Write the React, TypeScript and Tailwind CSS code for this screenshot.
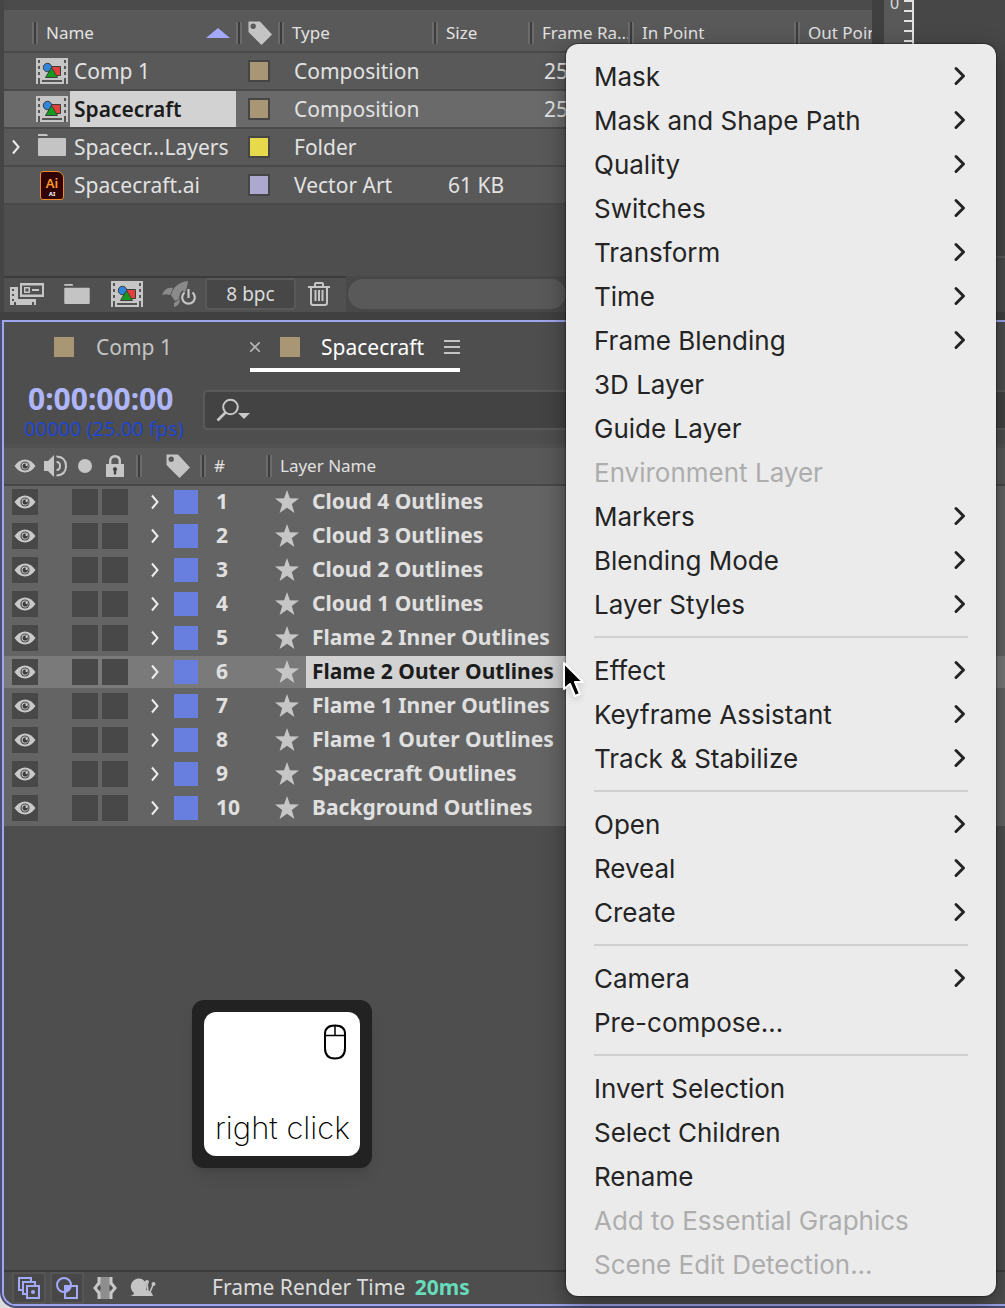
import type { ReactNode } from "react";

type MenuEntry = { label: string; submenu?: boolean; disabled?: boolean };

const menuGroups: MenuEntry[][] = [
  [
    { label: "Mask", submenu: true },
    { label: "Mask and Shape Path", submenu: true },
    { label: "Quality", submenu: true },
    { label: "Switches", submenu: true },
    { label: "Transform", submenu: true },
    { label: "Time", submenu: true },
    { label: "Frame Blending", submenu: true },
    { label: "3D Layer" },
    { label: "Guide Layer" },
    { label: "Environment Layer", disabled: true },
    { label: "Markers", submenu: true },
    { label: "Blending Mode", submenu: true },
    { label: "Layer Styles", submenu: true },
  ],
  [
    { label: "Effect", submenu: true },
    { label: "Keyframe Assistant", submenu: true },
    { label: "Track & Stabilize", submenu: true },
  ],
  [
    { label: "Open", submenu: true },
    { label: "Reveal", submenu: true },
    { label: "Create", submenu: true },
  ],
  [{ label: "Camera", submenu: true }, { label: "Pre-compose..." }],
  [
    { label: "Invert Selection" },
    { label: "Select Children" },
    { label: "Rename" },
    { label: "Add to Essential Graphics", disabled: true },
    { label: "Scene Edit Detection...", disabled: true },
  ],
];

const layers = [
  "Cloud 4 Outlines",
  "Cloud 3 Outlines",
  "Cloud 2 Outlines",
  "Cloud 1 Outlines",
  "Flame 2 Inner Outlines",
  "Flame 2 Outer Outlines",
  "Flame 1 Inner Outlines",
  "Flame 1 Outer Outlines",
  "Spacecraft Outlines",
  "Background Outlines",
];

const selectedLayer = 5;

const items = [
  { name: "Comp 1", icon: "comp", color: "bg-[#a89675]", type: "Composition", size: "", rate: "25" },
  { name: "Spacecraft", icon: "comp", color: "bg-[#a89675]", type: "Composition", size: "", rate: "25" },
  { name: "Spacecr...Layers", icon: "folder", color: "bg-[#e6da4c]", type: "Folder", size: "", rate: "" },
  { name: "Spacecraft.ai", icon: "ai", color: "bg-[#aca8cf]", type: "Vector Art", size: "61 KB", rate: "" },
];

function CompIcon({ className }: { className: string }) {
  return (
    <svg viewBox="0 0 32 26" className={className} aria-hidden="true">
      <path fill="#c6c6c6" d="M0 0h32v26H0z" />
      <path
        fill="#555"
        d="M2 2h2v3H2zM2 8h2v3H2zM2 14h2v3H2zM2 20h2v6H2zM28 2h2v3h-2zM28 8h2v3h-2zM28 14h2v3h-2zM28 20h2v6h-2zM6 22h20v2H6z"
      />
      <path fill="#e0413c" stroke="#3d3d3d" strokeWidth="1" d="M14.500 8.500h10v9h-10z" />
      <circle cx="11.500" cy="9.500" r="4.200" fill="#2f86dc" stroke="#3d3d3d" strokeWidth="1" />
      <path fill="#159a1d" stroke="#3d3d3d" strokeWidth="1" d="m15.500 9.500 6 10h-12z" />
    </svg>
  );
}

function FolderIcon({ className }: { className: string }) {
  return (
    <svg viewBox="0 0 28 22" className={className} aria-hidden="true">
      <path fill="#c4c4c4" d="M0 0h9l1 2H0zM0 5q0-1 1-1h26q1 0 1 1v16q0 1-1 1H1q-1 0-1-1z" />
    </svg>
  );
}

function AiIcon() {
  return (
    <span className="flex h-[29px] w-[24px] flex-col items-center rounded-[3px] rounded-tr-[7px] border border-[#f08b2c] bg-[#300203] pt-1">
      <span className="text-[13px] leading-[14px] font-semibold text-[#ff9a2b]">Ai</span>
      <span className="text-[6px] leading-[8px] font-bold text-white">AI</span>
    </span>
  );
}

function ItemIcon({ kind }: { kind: string }) {
  if (kind === "comp") return <CompIcon className="h-[26px] w-[32px]" />;
  if (kind === "folder") return <FolderIcon className="mb-1 ml-[2px] h-[22px] w-[28px]" />;
  return (
    <span className="pl-1">
      <AiIcon />
    </span>
  );
}

function TagIcon() {
  return (
    <svg viewBox="0 0 24 24" className="h-6 w-6" aria-hidden="true">
      <path fill="#c4c4c4" fillRule="evenodd" d="M.5.500H12L24 13.500 13.500 24 .5 11zM5.200 2.500a2.700 2.700 0 1 0 0 5.400 2.700 2.700 0 0 0 0-5.400z" />
    </svg>
  );
}

function EyeIcon() {
  return (
    <svg viewBox="0 0 22 14" className="h-[14px] w-[22px]" aria-hidden="true">
      <path fill="#c9c9c9" d="M.5 7Q5 .5 11 .5T21.500 7Q17 13.500 11 13.500T.5 7z" />
      <circle cx="11" cy="7" r="4.600" fill="#4a4a4a" />
      <circle cx="11" cy="7" r="3.400" fill="#c9c9c9" />
      <circle cx="11.200" cy="7" r="2.600" fill="#3c3c3c" />
      <circle cx="12.500" cy="6" r="1" fill="#ddd" />
    </svg>
  );
}

function Twirl() {
  return (
    <svg viewBox="0 0 10 16" className="h-4 w-[10px]" fill="none" stroke="#ececec" strokeWidth="2" aria-hidden="true">
      <path d="m2 1.500 5.500 6.500L2 14.500" />
    </svg>
  );
}

function StarIcon() {
  return (
    <svg viewBox="0 0 24 23" className="mb-[2px] h-[23px] w-6 shrink-0" aria-hidden="true">
      <path fill="#c6c6c6" d="m12 0 2.900 8.300 9.100.2-7.200 5.400L19.400 23 12 17.700 4.600 23l2.600-9.100L0 8.500l9.100-.2z" />
    </svg>
  );
}

// Column grip between two header cells
function Grip() {
  return <span className="h-[22px] w-[6px] shrink-0 border-x-2 border-[#6b6b6b] bg-[#3c3c3c]" />;
}

function HeadCell({ children, className = "" }: { children: ReactNode; className?: string }) {
  return (
    <th scope="col" className="p-0 text-left font-normal">
      <div className={`flex items-center ${className}`}>{children}</div>
    </th>
  );
}

function ProjectPanel() {
  return (
    <section className="flex min-w-0 flex-1 flex-col overflow-hidden border-l-4 border-[#454545] bg-[#4e4e4e]">
      <div className="h-[14px] border-b-4 border-[#5a5a5a] bg-[#4b4b4b]" />
      <table className="w-full table-fixed border-collapse bg-[#595959] text-[21px] whitespace-nowrap text-[#e2e2e2]">
        <colgroup>
          <col className="w-[28px]" />
          <col className="w-[204px]" />
          <col className="w-[42px]" />
          <col className="w-[154px]" />
          <col className="w-[96px]" />
          <col className="w-[100px]" />
          <col className="w-[166px]" />
          <col />
        </colgroup>
        <thead>
          <tr className="h-[38px] border-b-2 border-[#4a4a4a] text-[17px]">
            <td />
            <HeadCell className="gap-2">
              <Grip />
              <span className="flex-1">Name</span>
              <svg viewBox="0 0 24 10" className="mr-[6px] h-[10px] w-6" aria-hidden="true">
                <path fill="#a3a9fb" d="m12 0 12 10H0z" />
              </svg>
            </HeadCell>
            <HeadCell className="gap-[6px]">
              <Grip />
              <TagIcon />
            </HeadCell>
            <HeadCell className="gap-2">
              <Grip />
              Type
            </HeadCell>
            <HeadCell className="gap-2">
              <Grip />
              Size
            </HeadCell>
            <HeadCell className="gap-2">
              <Grip />
              Frame Ra...
            </HeadCell>
            <HeadCell className="gap-2">
              <Grip />
              In Point
            </HeadCell>
            <HeadCell className="gap-2">
              <Grip />
              Out Point
            </HeadCell>
          </tr>
        </thead>
        <tbody>
          {items.map((item, i) => (
            <tr
              key={item.name}
              className={`h-[38px] border-b-2 border-[#4a4a4a] ${i === 1 ? "bg-[#6a6a6a]" : ""}`}
            >
              <td className="p-0 pl-[7px]">
                {item.icon === "folder" && (
                  <button type="button" aria-label="Expand folder" className="block">
                    <Twirl />
                  </button>
                )}
              </td>
              <td className="p-0 pl-1">
                <div className="flex h-9 items-center">
                  <span className="flex w-[34px] shrink-0">
                    <ItemIcon kind={item.icon} />
                  </span>
                  <span
                    className={
                      i === 1
                        ? "flex h-9 flex-1 items-center bg-[#d2d2d2] pt-[2px] pl-1 font-semibold text-[#1c1c1c]"
                        : "pt-[2px] pl-1"
                    }
                  >
                    {item.name}
                  </span>
                </div>
              </td>
              <td className="p-0 pl-3">
                <span className={`block h-[22px] w-[22px] border-2 border-[#454545] ${item.color}`} />
              </td>
              <td className="p-0 pt-[2px] pl-4">{item.type}</td>
              <td className="p-0 pt-[2px] pl-4">{item.size}</td>
              <td className="p-0 pt-[2px] pl-4">{item.rate}</td>
              <td />
              <td />
            </tr>
          ))}
        </tbody>
      </table>
      <div className="h-[71px]" />
      <div className="flex h-9 items-stretch">
        <div className="flex w-[342px] items-center border-t-2 border-[#3b3b3b] bg-[#505050] pl-[6px] pb-[2px]">
          <button type="button" aria-label="Interpret footage">
            <svg viewBox="0 0 34 22" className="h-[22px] w-[34px]" aria-hidden="true">
              <path
                fill="#c6c6c6"
                fillRule="evenodd"
                d="M10 0h24v14H10zM12 2.500v9h20v-9zM0 4h8v12h18v6h-2v-3h-2v3H6v-3H4v3H0zM2 6v2h2V6zM2 11v2h2v-2zM2 16v2h2v-2z"
              />
              <path fill="#c6c6c6" fillRule="evenodd" d="M14 4h6v6h-6zM15.500 5.500v3h3v-3zM22 6h7v2h-7z" />
            </svg>
          </button>
          <button type="button" aria-label="New folder" className="ml-5">
            <FolderIcon className="h-[20px] w-[26px]" />
          </button>
          <button type="button" aria-label="New composition" className="ml-5">
            <CompIcon className="h-[26px] w-[34px]" />
          </button>
          <button type="button" aria-label="Project settings" className="ml-[18px]">
            <svg viewBox="0 0 34 28" className="h-7 w-[34px]" aria-hidden="true">
              <path fill="#8a8a8a" d="M26 1c-9 1-15 6-17 14l4 6c8-3 12-10 13-20zM11 8C5 7 2 10 0 15c3-1 5-1 8 0zM12 23v4c4-1 6-4 6-8z" />
              <g fill="none" stroke="#505050" strokeWidth="6">
                <path d="M22.500 12.500a6.300 6.300 0 1 0 8 0" />
              </g>
              <g fill="none" stroke="#c6c6c6" strokeWidth="2.200">
                <path d="M22.500 12.500a6.300 6.300 0 1 0 8 0M26.500 9v9" />
              </g>
            </svg>
          </button>
          <button
            type="button"
            className="ml-[9px] h-8 w-[91px] rounded border-2 border-[#595959] bg-[#474747] text-[19px] leading-7 text-[#dadada]"
          >
            8 bpc
          </button>
          <button type="button" aria-label="Delete" className="ml-3">
            <svg viewBox="0 0 22 24" className="h-6 w-[22px]" fill="none" stroke="#c6c6c6" strokeWidth="2" aria-hidden="true">
              <path d="M0 5h22M3 5v16q0 2 2 2h12q2 0 2-2V5M7 4V2q0-1 1-1h6q1 0 1 1v2M7.500 8v11M11 8v11M14.500 8v11" />
            </svg>
          </button>
        </div>
        <div className="flex flex-1 items-center bg-[#484848] pl-[2px]">
          <div className="h-[30px] w-[218px] rounded-full bg-[#595959]" />
        </div>
      </div>
    </section>
  );
}

function ViewerPanel() {
  return (
    <aside className="flex w-[133px] shrink-0 overflow-hidden bg-[#404040] pl-3">
      <div className="flex w-[30px] justify-between border-r-2 border-[#e2e2e2] bg-[#595959]">
        <span className="-mt-[7px] pl-[6px] text-base leading-5 text-[#dcdcdc]">0</span>
        <div className="flex flex-col gap-2">
          {Array.from({ length: 26 }, (_, i) => (
            <span key={i} className="h-[2px] w-2 bg-[#e2e2e2]" />
          ))}
        </div>
      </div>
      <div className="flex flex-1 flex-col justify-end bg-[#474747]">
        <div className="h-14 border-t-2 border-[#5a5a5a] bg-[#4b4b4b]" />
      </div>
    </aside>
  );
}

function TimelineTabs() {
  return (
    <div className="flex h-[50px] text-[21px] text-[#c4c4c4]">
      <button type="button" className="flex items-center pl-[50px]">
        <span className="h-5 w-5 bg-[#a89675]" />
        <span className="w-[176px] pt-[2px] pl-[22px] text-left">Comp 1</span>
      </button>
      <div className="flex w-[210px] items-center border-b-4 border-white pt-1">
        <button type="button" aria-label="Close tab">
          <svg viewBox="0 0 10 10" className="h-[10px] w-[10px]" stroke="#b4b4b4" strokeWidth="1.600" aria-hidden="true">
            <path d="m0 0 10 10M10 0 0 10" />
          </svg>
        </button>
        <span className="ml-5 h-5 w-5 bg-[#a89675]" />
        <button type="button" className="ml-[21px] pt-[2px] text-white">
          Spacecraft
        </button>
        <button type="button" aria-label="Panel menu" className="ml-auto">
          <svg viewBox="0 0 16 14" className="h-[14px] w-4" fill="#c4c4c4" aria-hidden="true">
            <path d="M0 0h16v2H0zM0 6h16v2H0zM0 12h16v2H0z" />
          </svg>
        </button>
      </div>
    </div>
  );
}

function Timecode() {
  return (
    <div className="flex h-[72px] items-center pt-1">
      <div className="w-[199px] pt-[6px] pl-5">
        <p className="pl-1 text-[30px] leading-8 font-bold text-[#aeb5f8]">0:00:00:00</p>
        <p className="text-[20px] leading-7 text-[#1f45cf]">00000 (25.00 fps)</p>
      </div>
      <label className="flex h-10 flex-1 items-center rounded-l border-2 border-r-0 border-[#595959] bg-[#434343] pl-[11px]">
        <svg viewBox="0 0 34 24" className="h-6 w-[34px]" aria-hidden="true">
          <circle cx="14.500" cy="9" r="7.300" fill="none" stroke="#c8c8c8" strokeWidth="2" />
          <path stroke="#c8c8c8" strokeWidth="2.600" d="m9.500 14.500-8 8" />
          <path fill="#c8c8c8" d="M22 15h12l-6 6z" />
        </svg>
        <input type="text" aria-label="Search layers" className="min-w-0 flex-1 bg-transparent px-2 text-xl text-white outline-none" />
      </label>
    </div>
  );
}

function LayerTable() {
  return (
    <table className="w-full table-fixed border-collapse text-[21px] whitespace-nowrap text-[#e0e0e0]">
      <colgroup>
        <col className="w-9" />
        <col className="w-[30px]" />
        <col className="w-[30px]" />
        <col className="w-8" />
        <col className="w-[34px]" />
        <col className="w-[34px]" />
        <col className="w-[66px]" />
        <col />
      </colgroup>
      <thead>
        <tr className="h-[39px] border-t-4 border-b-2 border-t-[#525252] border-b-[#484848] bg-[#595959] text-[17px]">
          <HeadCell className="pl-[10px]">
            <EyeIcon />
          </HeadCell>
          <HeadCell className="pl-1">
            <svg viewBox="0 0 24 22" className="h-[22px] w-6" aria-hidden="true">
              <path fill="#c6c6c6" d="M0 6h4l6-6v22l-6-6H0z" />
              <g fill="none" stroke="#c6c6c6" strokeWidth="2">
                <path d="M12.500 7q3.500 0 3.500 4t-3.500 4M12.500 1.500Q22 2 22 11t-9.500 9.500" />
              </g>
            </svg>
          </HeadCell>
          <HeadCell className="pl-2">
            <span className="h-[14px] w-[14px] rounded-full bg-[#c6c6c6]" />
          </HeadCell>
          <HeadCell className="pl-[6px]">
            <svg viewBox="0 0 18 22" className="h-[22px] w-[18px]" aria-hidden="true">
              <path fill="none" stroke="#c6c6c6" strokeWidth="2.400" d="M4.200 10V6.500Q4.200 1.300 9 1.300t4.800 5.200V10" />
              <path fill="#c6c6c6" d="M0 9h18v13H0z" />
              <path fill="#444" d="M9 12a2.200 2.200 0 0 1 1.200 4v3.500H7.800V16A2.200 2.200 0 0 1 9 12z" />
            </svg>
          </HeadCell>
          <HeadCell className="pl-1">
            <Grip />
          </HeadCell>
          <HeadCell>
            <TagIcon />
          </HeadCell>
          <HeadCell className="gap-2">
            <Grip />
            #
          </HeadCell>
          <HeadCell className="gap-2">
            <Grip />
            Layer Name
          </HeadCell>
        </tr>
      </thead>
      <tbody className="bg-[#646464] font-bold">
        {layers.map((name, i) => {
          const selected = i === selectedLayer;
          return (
            <tr key={name} className={`h-[34px] border-b-2 border-[#646464] ${selected ? "bg-[#7a7a7a]" : ""}`}>
              <td className="p-0 pl-2">
                <button type="button" aria-label={`Toggle ${name}`} className="flex h-[26px] w-[26px] items-center justify-center bg-[#484848]">
                  <EyeIcon />
                </button>
              </td>
              <td />
              <td className="p-0 pl-[2px]">
                <span className="block h-[26px] w-[26px] bg-[#484848]" />
              </td>
              <td className="p-0 pl-[2px]">
                <span className="block h-[26px] w-[26px] bg-[#484848]" />
              </td>
              <td className="p-0 pl-[18px]">
                <button type="button" aria-label={`Expand ${name}`} className="block">
                  <Twirl />
                </button>
              </td>
              <td className="p-0 pl-2">
                <span className="block h-6 w-6 bg-[#687fe0]" />
              </td>
              <td className="p-0 pl-4">{i + 1}</td>
              <td className="p-0 pl-[9px]">
                <div className="flex h-8 items-center gap-[7px]">
                  <StarIcon />
                  <span
                    className={
                      selected
                        ? "flex h-8 w-[300px] items-center bg-[#d2d2d2] pl-[6px] text-[#1c1c1c]"
                        : "pl-[6px]"
                    }
                  >
                    {name}
                  </span>
                </div>
              </td>
            </tr>
          );
        })}
      </tbody>
    </table>
  );
}

function KeyCap() {
  return (
    <div className="absolute top-[174px] left-[188px] rounded-xl bg-[#222] p-3 shadow-lg">
      <div className="flex h-36 w-[156px] flex-col items-end justify-between rounded-xl bg-white px-[10px] pt-3 pb-2">
        <svg viewBox="0 0 24 36" className="mr-[3px] h-9 w-6" fill="none" stroke="#000" aria-hidden="true">
          <path strokeWidth="2" d="M2 14V10Q2 1.500 12 1.500T22 10v14q0 10.500-10 10.500T2 24z" />
          <path strokeWidth="1.500" d="M2 11.500h20M12 1.500v10" />
        </svg>
        <span className="text-[31px] leading-10 font-extralight whitespace-nowrap text-black font-[Inter,sans-serif]">right click</span>
      </div>
    </div>
  );
}

function StatusBar() {
  return (
    <footer className="flex h-[34px] items-center border-t-2 border-[#3b3b3b] bg-[#4e4e4e] pl-2 text-[21px] text-[#dcdcdc]">
      <button type="button" aria-label="Layer switches" className="flex h-8 w-[34px] items-center justify-center border-2 border-[#555] bg-[#484848]">
        <svg viewBox="0 0 22 22" className="h-[22px] w-[22px]" fill="none" stroke="#a3a9fb" strokeWidth="2" aria-hidden="true">
          <path d="M13 4V1H1v12h3M17 8V5H5v12h3M9 9h12v12H9z" />
          <circle cx="15" cy="15" r="2" fill="#a3a9fb" stroke="none" />
        </svg>
      </button>
      <button type="button" aria-label="Transfer controls" className="ml-1 flex h-8 w-[34px] items-center justify-center border-2 border-[#555] bg-[#484848]">
        <svg viewBox="0 0 22 22" className="h-[22px] w-[22px]" fill="none" stroke="#a3a9fb" strokeWidth="2" aria-hidden="true">
          <circle cx="8" cy="8" r="7" />
          <path fill="#a3a9fb" stroke="none" d="M15 8a7 7 0 0 1-7 7V8z" />
          <path d="M15 9h6v12H9v-6" />
        </svg>
      </button>
      <button type="button" aria-label="In and out points" className="ml-[9px]">
        <svg viewBox="0 0 24 22" className="h-[22px] w-6" aria-hidden="true">
          <path fill="#8e8e8e" d="M6 0h12v7l-2 4 2 4v7H6v-7l2-4-2-4z" />
          <path fill="none" stroke="#c8c8c8" strokeWidth="3" d="M6 0v6l-4 5 4 5v6M18 0v6l4 5-4 5v6" />
        </svg>
      </button>
      <button type="button" aria-label="Render time pane" className="ml-[13px]">
        <svg viewBox="0 0 26 20" className="h-5 w-[26px]" fill="#c4c4c4" aria-hidden="true">
          <path d="M0 18q4-1 4-3a8 8 0 1 1 12-3l3 1q3 1 4 5z" />
          <path fill="none" stroke="#c4c4c4" strokeWidth="1.600" d="m18 14-1-9M20 14l3-7" />
          <circle cx="17" cy="4" r="2" />
          <circle cx="23.500" cy="6" r="2" />
        </svg>
      </button>
      <p className="ml-14 whitespace-nowrap">
        Frame Render Time <span className="pl-1 font-bold text-[#66dcbb]">20ms</span>
      </p>
    </footer>
  );
}

function ContextMenu() {
  return (
    <div
      role="menu"
      aria-label="Layer"
      className="absolute top-11 left-[566px] w-[430px] rounded-[12px] bg-[#ebebeb] px-7 pt-[11px] pb-[9px] text-[26px] text-[#242424] shadow-[0_0_2px_#000,0_8px_24px_rgba(0,0,0,0.4)] font-[Inter,sans-serif]"
    >
      {menuGroups.map((group, g) => (
        <div key={g} role="group">
          {g > 0 && <hr className="mt-[9px] mb-[11px] border-t-2 border-[#d0d0d0]" />}
          {group.map((entry) => (
            <button
              key={entry.label}
              type="button"
              role="menuitem"
              disabled={entry.disabled}
              className="flex h-11 w-full items-center justify-between pb-[2px] whitespace-nowrap disabled:text-[#adadad]"
            >
              {entry.label}
              {entry.submenu && (
                <svg viewBox="0 0 16 20" className="h-5 w-4" fill="none" stroke="#242424" strokeWidth="3" strokeLinecap="round" strokeLinejoin="round" aria-hidden="true">
                  <path d="m4 2.500 7.500 7.500L4 17.500" />
                </svg>
              )}
            </button>
          ))}
        </div>
      ))}
    </div>
  );
}

export default function App() {
  return (
    <div className="relative flex min-h-screen flex-col overflow-hidden bg-[#404040] font-['Noto_Sans',sans-serif]">
      <div className="flex">
        <ProjectPanel />
        <ViewerPanel />
      </div>
      <div className="mt-2 flex flex-1 flex-col bg-[#dcdcdc]">
        <div className="flex flex-1 flex-col rounded-bl-2xl bg-[#4a4d76] pb-[2px] pl-[2px]">
          <main className="flex flex-1 flex-col overflow-hidden rounded-bl-[14px] border-2 border-r-0 border-[#a0a6ee] bg-[#4e4e4e]">
            <TimelineTabs />
            <Timecode />
            <LayerTable />
            <div className="relative flex-1">
              <KeyCap />
            </div>
            <StatusBar />
          </main>
        </div>
      </div>
      <ContextMenu />
      <svg viewBox="0 0 24 38" className="absolute top-[660px] left-[562px] h-[38px] w-6 drop-shadow-md" aria-hidden="true">
        <path fill="#000" stroke="#fff" strokeWidth="2" strokeLinejoin="round" d="M2 3v26l6-5 5 12 5-2-5-12h8z" />
      </svg>
    </div>
  );
}
